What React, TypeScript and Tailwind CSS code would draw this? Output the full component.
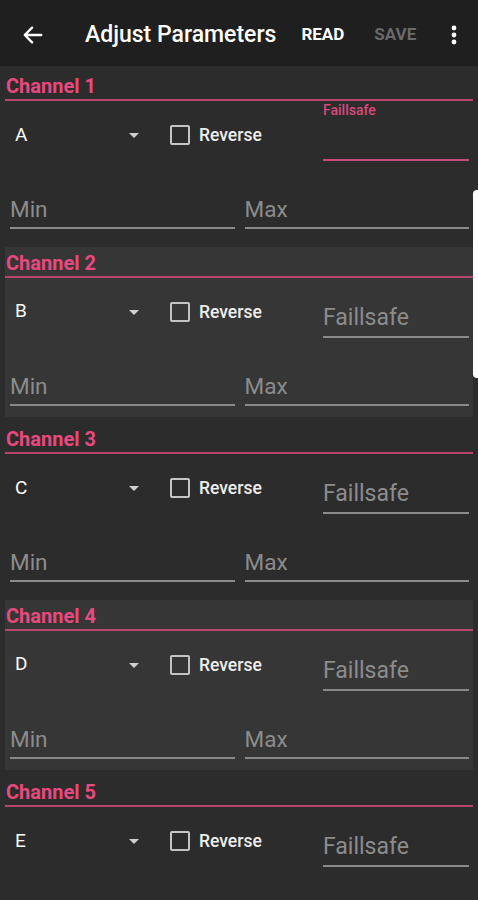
const channels = [
  { n: 1, v: "A", focused: true, card: false, last: false },
  { n: 2, v: "B", focused: false, card: true, last: false },
  { n: 3, v: "C", focused: false, card: false, last: false },
  { n: 4, v: "D", focused: false, card: true, last: false },
  { n: 5, v: "E", focused: false, card: false, last: true },
];

const font = { fontFamily: "Roboto, 'Noto Sans', sans-serif" };

const Channel = ({ n, v, focused, card, last }: { n: number; v: string; focused: boolean; card: boolean; last: boolean }) => {
  return (
    <div className={`mx-[5px] h-[170px] mb-[6.5px] flex flex-col ${card ? "bg-[#363636]" : ""}`}>
      {/* header */}
      <div className="pt-[4px] pl-[1px] text-[20px] leading-[24px] font-bold text-[#e8497f]">Channel {n}</div>
      <div className="mt-[1px] h-[2px] bg-[#b8466c]" />

      {/* first row */}
      <div className="flex items-start h-[60px]">
        <div className="mt-[22px] h-[24px] w-[155px] pl-[10px] pr-[20px] flex items-center">
          <span className="text-[19px] text-white">{v}</span>
          <svg className="ml-auto w-[12px] h-[8px]" viewBox="0 0 12 8">
            <path d="M1 2h10L6 7z" fill="#cfcfcf" />
          </svg>
        </div>
        <div className="mt-[24px] ml-[10px] w-[20px] h-[20px] border-2 border-[#c4c4c4] rounded-[2px]" />
        <span className="mt-[22px] ml-[9px] text-[17.5px] leading-[24px] font-medium text-[#eeeeee]">Reverse</span>
        <div className="ml-auto mr-[4px] w-[146px] flex flex-col">
          <div className="pt-[2px] h-[15px] text-[14px] leading-[15px] font-medium text-[#d9497c]">{focused ? "Faillsafe" : ""}</div>
          <div className="h-[43px] flex items-end pb-[4px]">
            {!focused && <span className="text-[23px] leading-[28px] text-[#8c8c8c]">Faillsafe</span>}
          </div>
          <div className={focused ? "h-[2px] bg-[#c9487a]" : "h-[2px] bg-[#8a8a8a]"} />
        </div>
      </div>

      {/* min / max */}
      {!last && (
        <div className="mt-[34px] flex pl-[5px] pr-[4px] gap-[10px]">
          <div className="flex-1 flex flex-col">
            <span className="h-[28px] text-[22.5px] leading-[28px] text-[#8c8c8c]">Min</span>
            <div className="mt-[4px] h-[2px] bg-[#8a8a8a]" />
          </div>
          <div className="flex-1 flex flex-col">
            <span className="h-[28px] text-[22.5px] leading-[28px] text-[#8c8c8c]">Max</span>
            <div className="mt-[4px] h-[2px] bg-[#8a8a8a]" />
          </div>
        </div>
      )}
    </div>
  );
};

const App = () => {
  return (
    <div className="relative w-[478px] h-[900px] overflow-hidden bg-[#2c2c2c]" style={font}>
      {/* Toolbar */}
      <div className="h-[66px] pt-[4px] bg-[#1f1f1f] flex items-center">
        <svg className="ml-[22px] w-[22px] h-[22px]" viewBox="0 0 24 24" fill="none" stroke="white" strokeWidth={2.6} strokeLinecap="round" strokeLinejoin="round">
          <path d="M21 12H4M11 4l-8 8 8 8" />
        </svg>
        <span className="ml-[41px] text-[23px] font-medium text-white">Adjust Parameters</span>
        <span className="ml-[25px] text-[17px] font-bold text-white">READ</span>
        <span className="ml-[30px] text-[17px] font-bold text-[#6a6a6a]">SAVE</span>
        <svg className="ml-auto mr-[21px] w-[6px] h-[20px]" viewBox="0 0 6 20" fill="white">
          <circle cx="3" cy="3" r="2.4" />
          <circle cx="3" cy="10" r="2.4" />
          <circle cx="3" cy="17" r="2.4" />
        </svg>
      </div>

      <div className="pt-[4px]">
        {channels.map((c) => (
          <Channel key={c.n} {...c} />
        ))}
      </div>

      {/* edge handle */}
      <div className="absolute right-0 top-[190px] w-[5px] h-[188px] bg-white rounded-l-[4px]" />
    </div>
  );
};

export default App;
